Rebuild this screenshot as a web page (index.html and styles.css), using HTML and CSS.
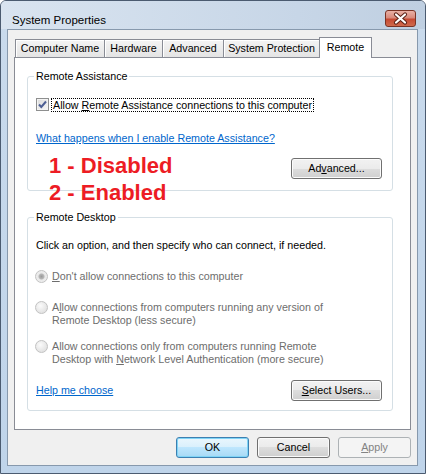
FILE: index.html
```html
<!DOCTYPE html>
<html lang="en">
<head>
    <meta charset="UTF-8">
    <title>System Properties</title>
    <link rel="stylesheet" href="styles.css">
</head>
<body>
    <div class="window">
        <div class="titlebar">
            <span class="title">System Properties</span>
            <div class="close-btn">
                <svg width="29" height="15" viewBox="0 0 29 15">
                    <path d="M10 3.5 L19 11.5 M19 3.5 L10 11.5" stroke="#5a2116" stroke-width="4.2" stroke-linecap="round"/>
                    <path d="M10 3.5 L19 11.5 M19 3.5 L10 11.5" stroke="#ffffff" stroke-width="2.2" stroke-linecap="round"/>
                </svg>
            </div>
        </div>

        <div class="client">
            <div class="tabs">
                <div class="tab tab-cn">Computer Name</div>
                <div class="tab tab-hw">Hardware</div>
                <div class="tab tab-adv">Advanced</div>
                <div class="tab tab-sp">System Protection</div>
                <div class="tab tab-remote selected">Remote</div>
            </div>

            <div class="pane">
                <fieldset class="group group-ra">
                    <legend>Remote Assistance</legend>
                    <div class="check-row">
                        <span class="checkbox">
                            <svg width="11" height="11" viewBox="0 0 11 11">
                                <path d="M2 5.5 L4.3 8 L9 2.5" fill="none" stroke="#4d5f94" stroke-width="2"/>
                            </svg>
                        </span>
                        <span class="focus-label">Allow <u>R</u>emote Assistance connections to this computer</span>
                    </div>
                    <a class="link link-ra">What happens when I enable Remote Assistance?</a>
                    <div class="btn-row">
                        <span class="btn">Ad<u>v</u>anced...</span>
                    </div>
                </fieldset>

                <fieldset class="group group-rd">
                    <legend>Remote Desktop</legend>
                    <div class="intro">Click an option, and then specify who can connect, if needed.</div>

                    <div class="radio-row radio-1">
                        <span class="radio checked"></span>
                        <span class="radio-text"><u>D</u>on't allow connections to this computer</span>
                    </div>
                    <div class="radio-row radio-2">
                        <span class="radio"></span>
                        <span class="radio-text">A<u>l</u>low connections from computers running any version of<br>Remote Desktop (less secure)</span>
                    </div>
                    <div class="radio-row radio-3">
                        <span class="radio"></span>
                        <span class="radio-text">Allow connections only from computers running Remote<br>Desktop with <u>N</u>etwork Level Authentication (more secure)</span>
                    </div>

                    <div class="bottom-row">
                        <a class="link">Help me choose</a>
                        <span class="btn"><u>S</u>elect Users...</span>
                    </div>
                </fieldset>

                <!-- note drawn over the dialog -->
                <div class="annotation">1 - Disabled<br>2 - Enabled</div>
            </div>

            <div class="dialog-buttons">
                <span class="btn btn-wide btn-default">OK</span>
                <span class="btn btn-wide">Cancel</span>
                <span class="btn btn-wide btn-disabled"><u>A</u>pply</span>
            </div>
        </div>
    </div>
</body>
</html>
```
FILE: styles.css
```css
body {
    margin: 0;
    background: #ffffff;
    font-family: "Liberation Sans", Arial, sans-serif;
    font-size: 10.7px;
    color: #000000;
}

.window {
    width: 426px;
    height: 474px;
    box-sizing: border-box;
    border: 1px solid #4b5b70;
    border-radius: 6px 6px 0 0;
    background: linear-gradient(to bottom, #dbe6f2 0, #c9daec 30px, #bfd4ea 100%);
    display: flex;
    flex-direction: column;
}

.titlebar {
    height: 28px;
    display: flex;
    justify-content: space-between;
    align-items: flex-start;
    padding-left: 11px;
    background: linear-gradient(to right, #d9e4f0, #c7d6e7 70%, #bfcfe1);
    border-radius: 5px 5px 0 0;
}

.title {
    margin-top: 12px;
    font-size: 11.5px;
    line-height: 14px;
}

.close-btn {
    margin-top: 9px;
    margin-right: 9px;
    width: 31px;
    height: 17px;
    box-sizing: border-box;
    border: 1px solid #7a3325;
    border-radius: 3px;
    background: linear-gradient(to bottom, #e9b1a6 0%, #d88a7c 45%, #c64a33 55%, #cf6a4d 100%);
    display: flex;
    align-items: center;
    justify-content: center;
}

.client {
    margin: 0 7px 7px 6px;
    height: 438px;
    box-sizing: border-box;
    border: 1px solid #8799ad;
    background: #f0f0f0;
    display: flex;
    flex-direction: column;
}

.tabs {
    margin: 7px 0 0 7px;
    height: 20px;
    display: flex;
    align-items: flex-end;
}

.tab {
    height: 18px;
    box-sizing: border-box;
    border: 1px solid #898c95;
    border-bottom: none;
    margin-right: -1px;
    background: linear-gradient(to bottom, #f4f4f4, #e4e4e4);
    box-shadow: inset 1px 1px 0 #ffffff;
    text-align: center;
    line-height: 17px;
}

.tab-cn { width: 90px; }
.tab-hw { width: 59px; }
.tab-adv { width: 62px; }
.tab-sp { width: 97px; }

.tab.selected {
    width: 53px;
    height: 21px;
    margin-bottom: -1px;
    background: #ffffff;
    box-shadow: none;
    line-height: 18px;
    position: relative;
    z-index: 1;
}

.pane {
    margin-left: 6px;
    width: 397px;
    height: 373px;
    box-sizing: border-box;
    border: 1px solid #898c95;
    background: #ffffff;
    padding: 12px 0 0 12px;
    position: relative;
}

.group {
    margin: 0;
    width: 366px;
    box-sizing: border-box;
    border: 1px solid #d5dfe5;
    border-radius: 3px;
    padding: 15px 10px 11px 8px;
    min-inline-size: 0;
}

.group legend {
    padding: 0 2px;
    margin-left: -2px;
    line-height: 13px;
}

.group-rd {
    margin-top: 20px;
    padding-bottom: 9px;
}

.check-row {
    display: flex;
    align-items: center;
    height: 14px;
}

.checkbox {
    width: 13px;
    height: 13px;
    box-sizing: border-box;
    border: 1px solid #8e8f8f;
    background: linear-gradient(135deg, #dcdcdc, #f6f6f6);
    box-shadow: inset 0 0 0 1px #f4f4f4;
    display: flex;
    align-items: center;
    justify-content: center;
}

.focus-label {
    margin-left: 2px;
    border: 1px dotted #000000;
    padding: 0 1px 0 1px;
    line-height: 12px;
}

.link {
    color: #0066cc;
    text-decoration: underline;
    line-height: 13px;
}

.link-ra {
    display: block;
    margin-top: 20px;
}

.btn-row {
    margin-top: 13px;
    display: flex;
    justify-content: flex-end;
}

.btn {
    width: 91px;
    height: 21px;
    box-sizing: border-box;
    border: 1px solid #707070;
    border-radius: 3px;
    background: linear-gradient(to bottom, #f2f2f2 0%, #ebebeb 50%, #dddddd 50%, #cfcfcf 100%);
    box-shadow: inset 0 0 0 1px #fbfbfb;
    display: flex;
    align-items: center;
    justify-content: center;
}

.intro {
    line-height: 13px;
}

.radio-row {
    display: flex;
    align-items: flex-start;
    color: #6d6d6d;
    line-height: 13px;
}

.radio-1 { margin-top: 18px; }
.radio-2 { margin-top: 18px; }
.radio-3 { margin-top: 13px; }

.radio {
    width: 13px;
    height: 13px;
    margin-left: -1px;
    box-sizing: border-box;
    border: 1px solid #c2c2c2;
    border-radius: 50%;
    background: radial-gradient(circle at 40% 35%, #fbfbfb, #e3e3e3 70%);
    flex-shrink: 0;
}

.radio.checked {
    background: radial-gradient(circle, #9a9a9a 0, #b8b8b8 2.5px, #e9e9e9 3.5px, #f3f3f3 100%);
}

.radio-text {
    margin-left: 4px;
}

.bottom-row {
    margin-top: 14px;
    display: flex;
    justify-content: space-between;
    align-items: center;
}

.annotation {
    position: absolute;
    top: 94px;
    left: 34px;
    color: #ed1c24;
    font-weight: bold;
    font-size: 22px;
    line-height: 27px;
}

.dialog-buttons {
    margin-top: 7px;
    padding-right: 6px;
    display: flex;
    justify-content: flex-end;
    gap: 8px;
}

.btn-wide {
    width: 73px;
}

.btn-default {
    border-color: #3c7fb1;
    background: linear-gradient(to bottom, #eaf6fd 0%, #d9f0fc 50%, #bee6fd 50%, #a7d9f5 100%);
    box-shadow: inset 0 0 0 1px #7fd4f6;
}

.btn-disabled {
    border-color: #adb2b5;
    background: #f4f4f4;
    box-shadow: none;
    color: #838383;
}
```
